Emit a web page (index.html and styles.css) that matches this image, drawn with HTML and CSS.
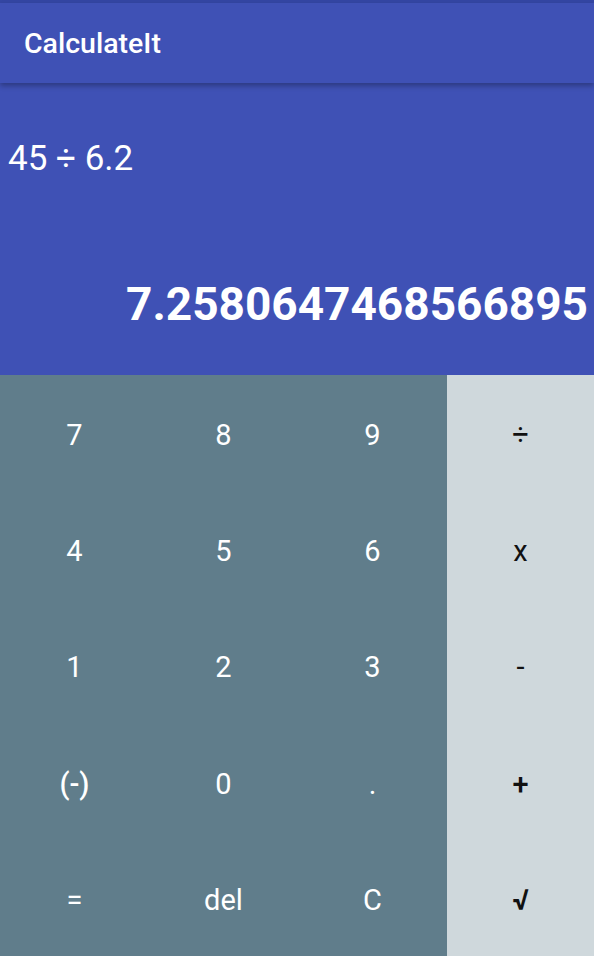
FILE: index.html
```html
<!DOCTYPE html>
<html>
<head>
<meta charset="utf-8">
<link rel="stylesheet" href="styles.css">
</head>
<body>
<div class="app">
  <div class="status"></div>
  <header class="appbar">CalculateIt</header>
  <section class="display">
    <div class="expr">45 ÷ 6.2</div>
    <div class="result">7.2580647468566895</div>
  </section>
  <section class="keypad">
    <div class="key num">7</div>
    <div class="key num">8</div>
    <div class="key num">9</div>
    <div class="key op">÷</div>
    <div class="key num">4</div>
    <div class="key num">5</div>
    <div class="key num">6</div>
    <div class="key op">x</div>
    <div class="key num">1</div>
    <div class="key num">2</div>
    <div class="key num">3</div>
    <div class="key op">-</div>
    <div class="key num strong">(-)</div>
    <div class="key num">0</div>
    <div class="key num">.</div>
    <div class="key op strong">+</div>
    <div class="key num">=</div>
    <div class="key num">del</div>
    <div class="key num">C</div>
    <div class="key op sqrt">√</div>
  </section>
</div>
</body>
</html>
```

FILE: styles.css
```css
html, body {
  margin: 0;
  padding: 0;
}
body {
  font-family: Roboto, "Liberation Sans", sans-serif;
  background: #607d8b;
}
.app {
  width: 594px;
  height: 956px;
  display: flex;
  flex-direction: column;
  overflow: hidden;
}
.status {
  height: 3px;
  background: #3446a3;
}
.appbar {
  height: 80px;
  background: #3f51b5;
  color: #fff;
  font-size: 28.5px;
  font-weight: 500;
  display: flex;
  align-items: center;
  padding-left: 24px;
  padding-top: 1px;
  box-sizing: border-box;
  box-shadow: 0 3px 5px rgba(0, 0, 0, 0.28);
  position: relative;
  z-index: 1;
}
.display {
  background: #3f51b5;
  color: #fff;
  display: flex;
  flex-direction: column;
  justify-content: space-between;
  height: 292px;
  box-sizing: border-box;
  padding: 55px 6px 44px 8px;
}
.expr {
  font-size: 35px;
  line-height: 41px;
}
.result {
  font-size: 46px;
  line-height: 54px;
  font-weight: 700;
  text-align: right;
  white-space: nowrap;
}
.keypad {
  flex: 1;
  display: grid;
  grid-template-columns: 149px 149px 149px 1fr;
  grid-template-rows: repeat(5, 1fr);
}
.key {
  display: flex;
  align-items: center;
  justify-content: center;
  font-size: 29px;
  padding-top: 4px;
}
.num {
  background: #607d8b;
  color: #fff;
}
.op {
  background: #cfd8dc;
  color: #111;
}
.strong {
  font-weight: 500;
}
.sqrt {
  font-weight: 700;
}
```
